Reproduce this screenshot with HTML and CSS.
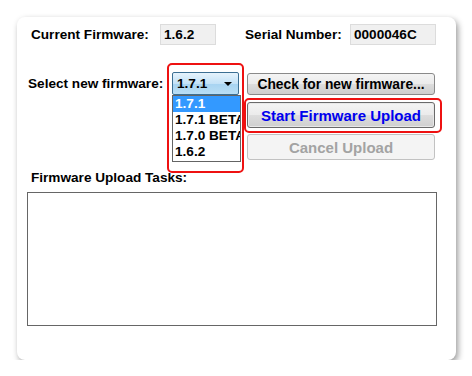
FILE: index.html
```html
<!DOCTYPE html>
<html lang="en">
<head>
  <meta charset="UTF-8" />
  <title>Firmware Upload</title>
  <link rel="stylesheet" href="styles.css">
</head>
<body>
  <div class="panel">
    <div class="info-row">
      <span class="info-label first">Current Firmware:</span>
      <span class="field small">1.6.2</span>
      <span class="info-label second">Serial Number:</span>
      <span class="field wide">0000046C</span>
    </div>

    <div class="controls">
      <span class="select-label">Select new firmware:</span>
      <div class="combo">
        <span>1.7.1</span>
        <span class="arrow"></span>
      </div>
      <div class="actions">
        <button class="btn">Check for new firmware...</button>
        <button class="btn primary">Start Firmware Upload</button>
        <button class="btn" disabled>Cancel Upload</button>
      </div>
    </div>

    <div class="tasks-label">Firmware Upload Tasks:</div>
    <div class="tasks"></div>

    <!-- open dropdown list -->
    <ul class="combo-list">
      <li class="selected">1.7.1</li>
      <li>1.7.1 BETA</li>
      <li>1.7.0 BETA</li>
      <li>1.6.2</li>
    </ul>

    <!-- red callouts -->
    <div class="callout combo-callout"></div>
    <div class="callout upload-callout"></div>
  </div>
</body>
</html>
```

FILE: styles.css
```css
body {
  margin: 0;
  background: #fff;
  font-family: "Liberation Sans", Arial, sans-serif;
  font-size: 13.6px;
  font-weight: bold;
  color: #000;
}

.panel {
  position: relative;
  box-sizing: border-box;
  width: 439px;
  height: 343px;
  margin: 17px 0 0 17px;
  padding-top: 7px;
  background: #fff;
  border-radius: 8px;
  box-shadow: 2px 3px 6px rgba(0, 0, 0, 0.4);
}

.info-row {
  display: flex;
  align-items: center;
  height: 21px;
  padding-left: 14px;
}

.info-label.first {
  width: 129px;
}

.info-label.second {
  width: 105px;
  margin-left: 29px;
}

.field {
  box-sizing: border-box;
  height: 21px;
  line-height: 19px;
  padding-left: 3px;
  background: #f0f0f0;
  border: 1px solid #dcdcdc;
}

.field.small {
  width: 56px;
}

.field.wide {
  width: 86px;
}

.controls {
  display: flex;
  align-items: flex-start;
  margin-top: 27px;
  padding-left: 11px;
}

.select-label {
  width: 144px;
  line-height: 23px;
}

.combo {
  box-sizing: border-box;
  width: 67px;
  height: 23px;
  display: flex;
  align-items: center;
  justify-content: space-between;
  padding: 0 6px 0 4px;
  border: 1px solid #3c6f93;
  border-radius: 2px;
  background: linear-gradient(#e6f3fc, #c4e2f7 50%, #a7d3f1 51%, #b9def5);
}

.arrow {
  width: 0;
  height: 0;
  border-left: 4px solid transparent;
  border-right: 4px solid transparent;
  border-top: 4px solid #000;
}

.actions {
  display: flex;
  flex-direction: column;
  margin-left: 8px;
  margin-top: 1px;
}

.btn {
  box-sizing: border-box;
  width: 188px;
  height: 22px;
  padding: 0;
  font-family: inherit;
  font-size: 13.8px;
  font-weight: bold;
  color: #000;
  border: 1px solid #8a8a8a;
  border-radius: 3px;
  background: linear-gradient(#f4f4f4, #ebebeb 50%, #dddddd 51%, #cfcfcf);
}

.btn.primary {
  height: 26px;
  margin-top: 7px;
  font-size: 15px;
  color: #0000ee;
  border-color: #6a6a6a;
  box-shadow: inset 0 0 0 1px #e8e8e8;
}

.btn:disabled {
  height: 26px;
  margin-top: 6px;
  font-size: 15px;
  color: #a3a3a3;
  border-color: #c2c2c2;
  background: #f4f4f4;
}

.tasks-label {
  margin-top: 10px;
  padding-left: 14px;
  line-height: 16px;
}

.tasks {
  box-sizing: border-box;
  width: 410px;
  height: 134px;
  margin: 6px 0 0 10px;
  border: 1px solid #666;
}

.combo-list {
  position: absolute;
  left: 155px;
  top: 78px;
  box-sizing: border-box;
  width: 69px;
  height: 67px;
  margin: 0;
  padding: 0;
  list-style: none;
  overflow: hidden;
  white-space: nowrap;
  background: #fff;
  border: 1px solid #646464;
}

.combo-list li {
  height: 16px;
  line-height: 16px;
  padding-left: 2px;
}

.combo-list li.selected {
  background: #3399ff;
  color: #fff;
}

.callout {
  position: absolute;
  border: 2px solid #ee1111;
  border-radius: 5px;
  box-sizing: border-box;
}

.combo-callout {
  left: 150px;
  top: 46px;
  width: 77px;
  height: 110px;
}

.upload-callout {
  left: 227px;
  top: 81px;
  width: 198px;
  height: 35px;
}
```
